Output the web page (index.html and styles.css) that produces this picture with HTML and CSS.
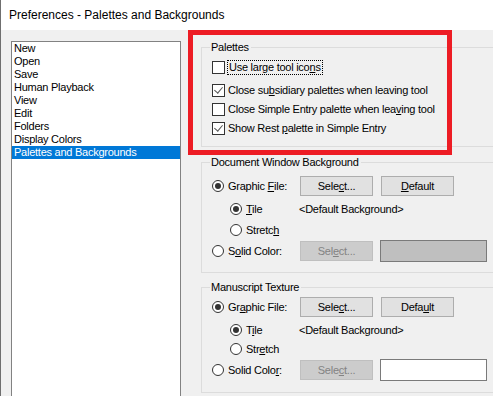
FILE: index.html
```html
<!DOCTYPE html>
<html lang="en">
<head>
  <meta charset="utf-8">
  <title>Preferences - Palettes and Backgrounds</title>
  <link rel="stylesheet" href="styles.css">
</head>
<body>
  <div id="win">
    <!-- title bar -->
    <div class="titlebar">Preferences - Palettes and Backgrounds</div>

    <div class="client">
      <!-- category list -->
      <ul class="listbox">
        <li>New</li>
        <li>Open</li>
        <li>Save</li>
        <li>Human Playback</li>
        <li>View</li>
        <li>Edit</li>
        <li>Folders</li>
        <li>Display Colors</li>
        <li class="sel">Palettes and Backgrounds</li>
      </ul>

      <div class="panel">
        <fieldset class="group grp-palettes">
          <legend>Palettes</legend>
          <div class="chk first"><span class="box"></span><span class="focus">Use large tool ico<u>n</u>s</span></div>
          <div class="chk gap10"><span class="box on"></span><span>Close su<u>b</u>sidiary palettes when leaving tool</span></div>
          <div class="chk"><span class="box"></span><span>Close Simple Entry palette when lea<u>v</u>ing tool</span></div>
          <div class="chk"><span class="box on"></span><span>Show Rest <u>p</u>alette in Simple Entry</span></div>
        </fieldset>

        <fieldset class="group grp-bg">
          <legend>Document Window Background</legend>
          <div class="row row-file">
            <span class="radio on"></span><span class="lbl">Graphic <u>F</u>ile:</span>
            <button class="btn">Sele<u>c</u>t...</button>
            <button class="btn btn-def"><u>D</u>efault</button>
          </div>
          <div class="row row-sub">
            <span class="radio on"></span><span class="lbl-sub"><u>T</u>ile</span>
            <span class="path">&lt;Default Background&gt;</span>
          </div>
          <div class="row row-sub row-stretch">
            <span class="radio"></span><span class="lbl-sub">Stretc<u>h</u></span>
          </div>
          <div class="row row-solid">
            <span class="radio"></span><span class="lbl">S<u>o</u>lid Color:</span>
            <button class="btn" disabled>Sel<u>e</u>ct...</button>
            <span class="swatch gray"></span>
          </div>
        </fieldset>

        <fieldset class="group grp-tex">
          <legend>Manuscript Texture</legend>
          <div class="row row-file">
            <span class="radio on"></span><span class="lbl">Gr<u>a</u>phic File:</span>
            <button class="btn">Sele<u>c</u>t...</button>
            <button class="btn btn-def">Defa<u>u</u>lt</button>
          </div>
          <div class="row row-sub">
            <span class="radio on"></span><span class="lbl-sub">T<u>i</u>le</span>
            <span class="path">&lt;Default Background&gt;</span>
          </div>
          <div class="row row-sub row-stretch2">
            <span class="radio"></span><span class="lbl-sub">Str<u>e</u>tch</span>
          </div>
          <div class="row row-solid">
            <span class="radio"></span><span class="lbl">Solid Colo<u>r</u>:</span>
            <button class="btn" disabled>Sele<u>c</u>t...</button>
            <span class="swatch white"></span>
          </div>
        </fieldset>
      </div>
    </div>

    <!-- red highlight drawn over the dialog -->
    <div class="mark"></div>
  </div>
</body>
</html>
```

FILE: styles.css
```css
* { margin: 0; padding: 0; box-sizing: border-box; }
body {
  width: 493px;
  height: 396px;
  overflow: hidden;
  background: #f0f0f0;
  font-family: "Liberation Sans", Arial, sans-serif;
  font-size: 11px;
  letter-spacing: -0.25px;
  color: #000;
}
#win {
  position: relative;
  height: 396px;
  border-left: 1px solid #6f6f6f;
  overflow: hidden;
}
/* title bar */
.titlebar {
  height: 30px;
  background: #fff;
  padding: 8px 0 0 8px;
  font-size: 12px;
  line-height: 15px;
  letter-spacing: 0;
  color: #000;
}
.client {
  display: flex;
  padding: 11px 0 0 10px;
}
/* list on the left */
.listbox {
  list-style: none;
  width: 170px;
  height: 400px;
  flex: none;
  background: #fff;
  border: 1px solid #828282;
}
.listbox li {
  height: 13px;
  line-height: 13px;
  padding-left: 2px;
  white-space: nowrap;
}
.listbox li.sel { background: #0078d7; color: #fff; }

/* right side */
.panel {
  margin-left: 20px;
  width: 300px;
  flex: none;
}
.group {
  border: 1px solid #dcdcdc;
  padding: 0 0 0 10px;
}
.group legend {
  margin-left: -2px;
  padding: 0 2px 0 1px;
  line-height: 13px;
  height: 13px;
}
.grp-palettes { padding-top: 7px; padding-bottom: 11px; }
.grp-bg { margin-top: 9px; padding-top: 7px; padding-bottom: 10px; }
.grp-tex { margin-top: 8px; padding-top: 3px; padding-bottom: 11px; }

/* checkboxes */
.chk {
  display: flex;
  align-items: center;
  height: 13px;
  line-height: 13px;
  margin-top: 6px;
  white-space: nowrap;
}
.chk.first { margin-top: 0; }
.chk.gap10 { margin-top: 10px; }
.box {
  width: 13px;
  height: 13px;
  flex: none;
  border: 1px solid #333;
  background: #fff;
  margin-right: 3px;
  position: relative;
}
.box.on::after {
  content: "";
  position: absolute;
  left: 3px;
  top: 0px;
  width: 4px;
  height: 7px;
  border: solid #555;
  border-width: 0 1px 1px 0;
  transform: rotate(40deg);
}
.focus { outline: 1px dotted #000; padding: 0 1px; }

/* radio rows */
.row {
  display: flex;
  align-items: center;
  white-space: nowrap;
}
.row-file { height: 20px; }
.row-sub { height: 13px; margin-top: 6px; padding-left: 18px; }
.row-stretch { margin-top: 8px; }
.row-stretch2 { margin-top: 6px; }
.row-solid { height: 22px; margin-top: 4px; }
.radio {
  width: 12px;
  height: 12px;
  flex: none;
  border: 1px solid #333;
  border-radius: 50%;
  background: #fff;
  position: relative;
  margin-right: 4px;
}
.radio.on::after {
  content: "";
  position: absolute;
  left: 2px;
  top: 2px;
  width: 6px;
  height: 6px;
  border-radius: 50%;
  background: #333;
}
.lbl { width: 72px; flex: none; }
.lbl-sub { width: 53px; flex: none; }
.btn {
  width: 73px;
  height: 20px;
  flex: none;
  font: inherit;
  letter-spacing: inherit;
  color: #000;
  background: #e1e1e1;
  border: 1px solid #adadad;
}
.btn-def { margin-left: 8px; }
.btn:disabled { background: #cccccc; border-color: #bfbfbf; color: #838383; }
.swatch {
  width: 107px;
  height: 22px;
  flex: none;
  margin-left: 7px;
  border: 1px solid #7a7a7a;
}
.swatch.gray { background: #bfbfbf; }
.swatch.white { background: #fff; }

/* red annotation box */
.mark {
  position: absolute;
  left: 187px;
  top: 30px;
  width: 264px;
  height: 125px;
  border: 5px solid #ed1c24;
}
```
